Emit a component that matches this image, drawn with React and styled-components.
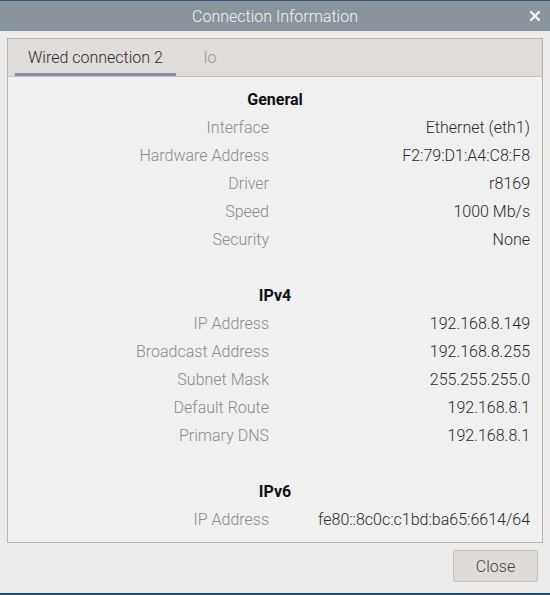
import React from 'react';
import styled, { createGlobalStyle } from 'styled-components';

const Global = createGlobalStyle`
  html, body {
    margin: 0;
    padding: 0;
    background: #edecea;
  }
  body {
    font-family: Roboto, "Noto Sans", "Liberation Sans", sans-serif;
  }
`;

const Window = styled.div`
  width: 550px;
  height: 595px;
  display: flex;
  flex-direction: column;
  background: #edecea;
  border-bottom: 2px solid #1d4a78;
  box-sizing: border-box;
`;

const TitleBar = styled.div`
  height: 31px;
  border-top: 1px solid #3c5a78;
  background: #8a949d;
  color: #f2f2f2;
  font-size: 16px;
  font-weight: 300;
  display: flex;
  align-items: center;
  justify-content: center;
  position: relative;
  box-sizing: border-box;
`;

const CloseX = styled.span`
  position: absolute;
  right: 7px;
  top: 7px;
  width: 16px;
  height: 16px;
  display: flex;
`;

const Body = styled.div`
  flex: 1;
  display: flex;
  flex-direction: column;
  padding: 7px 7px 0 7px;
`;

const Notebook = styled.div`
  border: 1px solid #b4b4b2;
  background: #f0f0f0;
  display: flex;
  flex-direction: column;
`;

const TabBar = styled.div`
  display: flex;
  background: #dfdcd9;
  border-bottom: 1px solid #c6c4c1;
  height: 38px;
  padding-left: 7px;
  box-sizing: border-box;
`;

const Tab = styled.div`
  display: flex;
  align-items: center;
  padding: 3px ${(p) => p.$pad}px 0;
  font-size: 16px;
  font-weight: 300;
  color: ${(p) => (p.$active ? '#2e2e2e' : '#9a9896')};
  border-bottom: 3px solid ${(p) => (p.$active ? '#8890a0' : 'transparent')};
`;

const Grid = styled.div`
  display: grid;
  grid-template-columns: 1fr 1fr;
  column-gap: 12px;
  padding: 9px 12px 8px;
  grid-auto-rows: 28px;
`;

const Heading = styled.div`
  grid-column: 1 / 3;
  text-align: center;
  font-weight: 700;
  font-size: 16px;
  color: #111;
  line-height: 28px;
`;

const Label = styled.div`
  text-align: right;
  font-size: 16px;
  font-weight: 300;
  color: #8c8c8c;
  line-height: 28px;
  white-space: nowrap;
`;

const Value = styled.div`
  text-align: right;
  font-size: 16px;
  font-weight: 300;
  color: #2a2a2a;
  line-height: 28px;
  white-space: nowrap;
`;

const Spacer = styled.div`
  grid-column: 1 / 3;
`;

const Footer = styled.div`
  display: flex;
  justify-content: flex-end;
  padding: 7px 5px 0 0;
`;

const Button = styled.button`
  width: 85px;
  height: 32px;
  border: 1px solid #c4c2bf;
  background: #dedbd8;
  border-radius: 2px;
  font-family: inherit;
  font-size: 16px;
  font-weight: 300;
  color: #444;
`;

const sections = [
  {
    title: 'General',
    rows: [
      ['Interface', 'Ethernet (eth1)'],
      ['Hardware Address', 'F2:79:D1:A4:C8:F8'],
      ['Driver', 'r8169'],
      ['Speed', '1000 Mb/s'],
      ['Security', 'None'],
    ],
  },
  {
    title: 'IPv4',
    rows: [
      ['IP Address', '192.168.8.149'],
      ['Broadcast Address', '192.168.8.255'],
      ['Subnet Mask', '255.255.255.0'],
      ['Default Route', '192.168.8.1'],
      ['Primary DNS', '192.168.8.1'],
    ],
  },
  {
    title: 'IPv6',
    rows: [['IP Address', 'fe80::8c0c:c1bd:ba65:6614/64']],
  },
];

const App = () => (
  <Window>
    <Global />
    <TitleBar>
      Connection Information
      <CloseX>
        <svg width="16" height="16" viewBox="0 0 16 16">
          <path d="M4 4 L12 12 M12 4 L4 12" stroke="#f4f4f4" strokeWidth="2.4" strokeLinecap="round" />
        </svg>
      </CloseX>
    </TitleBar>
    <Body>
      <Notebook>
        <TabBar>
          <Tab $active $pad={13}>Wired connection 2</Tab>
          <Tab $pad={28}>lo</Tab>
        </TabBar>
        <Grid>
          {sections.map((s, i) => (
            <React.Fragment key={s.title}>
              {i > 0 && <Spacer />}
              <Heading>{s.title}</Heading>
              {s.rows.map(([l, v]) => (
                <React.Fragment key={l}>
                  <Label>{l}</Label>
                  <Value>{v}</Value>
                </React.Fragment>
              ))}
            </React.Fragment>
          ))}
        </Grid>
      </Notebook>
      <Footer>
        <Button>Close</Button>
      </Footer>
    </Body>
  </Window>
);

export default App;
